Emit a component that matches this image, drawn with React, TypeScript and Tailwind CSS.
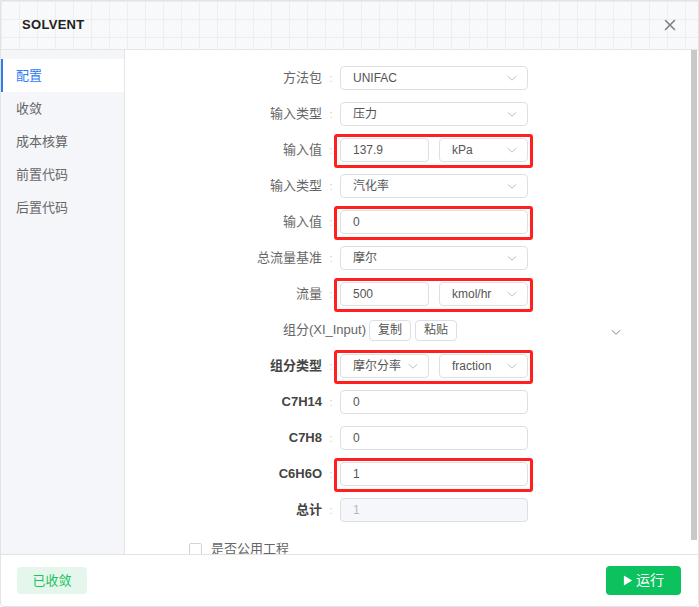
import React from 'react';

const font = { fontFamily: '"Liberation Sans", "Noto Sans CJK SC", sans-serif' };

const Chevron: React.FC<{ className?: string }> = ({ className }) => (
  <svg viewBox="0 0 12 12" className={className} fill="none" stroke="currentColor" strokeWidth="1" strokeLinecap="round" strokeLinejoin="round">
    <path d="M2 4.5 6 8.2 10 4.5" />
  </svg>
);

const Select: React.FC<{ value: string; className?: string }> = ({ value, className = 'w-[188px]' }) => (
  <div className={`${className} h-[24px] border border-[#dcdfe6] rounded-[4px] bg-white flex items-center pl-[12px] pr-[9px] text-[12px] text-[#555]`}>
    <span className="flex-1 truncate">{value}</span>
    <Chevron className="w-[12px] h-[12px] text-[#b8bcc4]" />
  </div>
);

const Input: React.FC<{ value: string; className?: string; disabled?: boolean }> = ({ value, className = 'w-[188px]', disabled }) => (
  <div
    className={`${className} h-[24px] border border-[#dcdfe6] rounded-[4px] flex items-center pl-[12px] text-[12px] ${
      disabled ? 'bg-[#f5f7fa] text-[#b4b8bf]' : 'bg-white text-[#555]'
    }`}
  >
    {value}
  </div>
);

// red annotation frame drawn over a field group
const Marked: React.FC<{ children: React.ReactNode; on?: boolean }> = ({ children, on }) => (
  <div className="relative flex gap-[10px]">
    {on && <div className="absolute left-[-6px] right-[-5px] top-[-4px] bottom-[-6px] border-[3px] border-[#ff1f1f] rounded-[3px]" />}
    {children}
  </div>
);

const Row: React.FC<{ label: string; strong?: boolean; children: React.ReactNode }> = ({ label, strong, children }) => (
  <div className="h-[36px] flex items-center">
    <div className={`w-[197px] text-right text-[13px] ${strong ? 'font-bold text-[#444]' : 'text-[#666]'}`}>{label}</div>
    <div className="w-[18px] text-center text-[11px] text-[#c8c8c8]">:</div>
    {children}
  </div>
);

const menu = ['配置', '收敛', '成本核算', '前置代码', '后置代码'];

export default function App() {
  return (
    <div style={font} className="w-[699px] h-[607px] flex flex-col bg-white border border-[#e3e3e3] rounded-b-[4px] overflow-hidden">
      <div className="h-[49px] shrink-0 flex items-center justify-between pl-[21px] pr-[22px] border-b border-[#e6e6e6] bg-[#f8f9fb] bg-[linear-gradient(to_right,#eceef2_1px,transparent_1px),linear-gradient(to_bottom,#eceef2_1px,transparent_1px)] bg-[size:18px_18px]">
        <span className="text-[13px] font-bold text-[#222] tracking-[0.3px]">SOLVENT</span>
        <svg viewBox="0 0 12 12" className="w-[12px] h-[12px] text-[#808080]" stroke="currentColor" strokeWidth="1.6" strokeLinecap="round">
          <path d="M1.5 1.5 10.5 10.5M10.5 1.5 1.5 10.5" />
        </svg>
      </div>

      <div className="flex flex-1 min-h-0">
        <div className="w-[124px] shrink-0 bg-[#f5f6fa] border-r border-[#e6e6e6] pt-[9px]">
          {menu.map((m, i) => (
            <div
              key={m}
              className={`h-[33px] flex items-center pl-[13px] text-[13px] border-l-[2px] ${
                i === 0 ? 'bg-white text-[#2d7cf0] border-[#2d7cf0]' : 'text-[#666] border-transparent'
              }`}
            >
              {m}
            </div>
          ))}
        </div>

        <div className="relative flex-1 min-w-0 overflow-hidden">
          <div className="pt-[10px] pr-[8px]">
            <Row label="方法包">
              <Select value="UNIFAC" />
            </Row>
            <Row label="输入类型">
              <Select value="压力" />
            </Row>
            <Row label="输入值">
              <Marked on>
                <Input value="137.9" className="w-[89px]" />
                <Select value="kPa" className="w-[89px]" />
              </Marked>
            </Row>
            <Row label="输入类型">
              <Select value="汽化率" />
            </Row>
            <Row label="输入值">
              <Marked on>
                <Input value="0" />
              </Marked>
            </Row>
            <Row label="总流量基准">
              <Select value="摩尔" />
            </Row>
            <Row label="流量">
              <Marked on>
                <Input value="500" className="w-[89px]" />
                <Select value="kmol/hr" className="w-[89px]" />
              </Marked>
            </Row>

            <div className="h-[36px] flex items-center">
              <div className="w-[241px] text-right text-[13px] text-[#666]">组分(XI_Input)</div>
              <div className="flex gap-[4px] ml-[3px]">
                <button className="h-[21px] w-[42px] border border-[#dcdfe6] rounded-[4px] text-[12px] text-[#555] bg-white">复制</button>
                <button className="h-[21px] w-[42px] border border-[#dcdfe6] rounded-[4px] text-[12px] text-[#555] bg-white">粘贴</button>
              </div>
              <div className="flex-1" />
              <Chevron className="w-[12px] h-[12px] text-[#888] mr-[68px] mt-[4px]" />
            </div>

            <Row label="组分类型" strong>
              <Marked on>
                <Select value="摩尔分率" className="w-[89px]" />
                <Select value="fraction" className="w-[89px]" />
              </Marked>
            </Row>
            <Row label="C7H14" strong>
              <Input value="0" />
            </Row>
            <Row label="C7H8" strong>
              <Input value="0" />
            </Row>
            <Row label="C6H6O" strong>
              <Marked on>
                <Input value="1" />
              </Marked>
            </Row>
            <Row label="总计" strong>
              <Input value="1" disabled />
            </Row>

            <div className="h-[36px] mt-[3px] flex items-center pl-[64px] gap-[9px]">
              <div className="w-[13px] h-[13px] border border-[#d0d3d9] rounded-[2px] bg-white" />
              <span className="text-[13px] text-[#666]">是否公用工程</span>
            </div>
          </div>

          <div className="absolute right-[1px] top-0 w-[6px] h-[490px] bg-[#c9c9c9]" />
        </div>
      </div>

      <div className="h-[52px] shrink-0 border-t border-[#e3e3e3] flex items-center justify-between pl-[16px] pr-[17px]">
        <button className="h-[27px] w-[70px] rounded-[4px] bg-[#e5f7ec] text-[#1cc35f] text-[13px]">已收敛</button>
        <button className="h-[29px] w-[75px] rounded-[4px] bg-[#0bc25e] text-white text-[14px] flex items-center justify-center gap-[3px]">
          <svg viewBox="0 0 10 12" className="w-[10px] h-[11px]" fill="currentColor">
            <path d="M0.5 0.5 9.5 6 0.5 11.5Z" />
          </svg>
          运行
        </button>
      </div>
    </div>
  );
}
